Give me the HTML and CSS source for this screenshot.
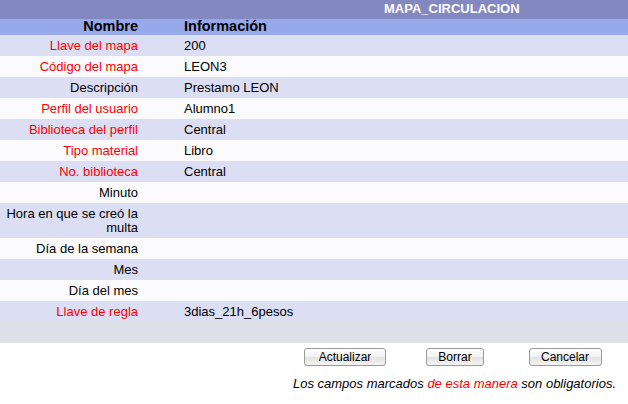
FILE: index.html
```html
<!DOCTYPE html>
<html lang="es">
<head>
<meta charset="utf-8">
<link rel="stylesheet" href="styles.css">
</head>
<body>
<div class="title-bar">MAPA_CIRCULACION</div>
<div class="grid">
  <div class="row head"><div class="label">Nombre</div><div class="value">Información</div></div>
  <div class="row odd"><div class="label req">Llave del mapa</div><div class="value">200</div></div>
  <div class="row even"><div class="label req">Código del mapa</div><div class="value">LEON3</div></div>
  <div class="row odd"><div class="label">Descripción</div><div class="value">Prestamo LEON</div></div>
  <div class="row even"><div class="label req">Perfil del usuario</div><div class="value">Alumno1</div></div>
  <div class="row odd"><div class="label req">Biblioteca del perfil</div><div class="value">Central</div></div>
  <div class="row even"><div class="label req">Tipo material</div><div class="value">Libro</div></div>
  <div class="row odd"><div class="label req">No. biblioteca</div><div class="value">Central</div></div>
  <div class="row even"><div class="label">Minuto</div><div class="value"></div></div>
  <div class="row odd"><div class="label">Hora en que se creó la multa</div><div class="value"></div></div>
  <div class="row even"><div class="label">Día de la semana</div><div class="value"></div></div>
  <div class="row odd"><div class="label">Mes</div><div class="value"></div></div>
  <div class="row even"><div class="label">Día del mes</div><div class="value"></div></div>
  <div class="row odd"><div class="label req">Llave de regla</div><div class="value">3dias_21h_6pesos</div></div>
  <div class="spacer"></div>
</div>
<div class="actions">
  <div class="cell"><button class="btn btn-update">Actualizar</button></div>
  <div class="cell"><button class="btn btn-delete">Borrar</button></div>
  <div class="cell"><button class="btn btn-cancel">Cancelar</button></div>
</div>
<p class="note">Los campos marcados <span class="req">de esta manera</span> son obligatorios.</p>
</body>
</html>
```
FILE: styles.css
```css
html, body {
  margin: 0;
  padding: 0;
  background: #ffffff;
}
body {
  font-family: "Liberation Sans", Arial, Helvetica, sans-serif;
  font-size: 13px;
  color: #000000;
}
.title-bar {
  height: 19px;
  line-height: 17px;
  background: #8488c0;
  color: #ffffff;
  font-weight: bold;
  padding-left: 384px;
}
.grid {
  display: flex;
  flex-direction: column;
}
.row {
  display: grid;
  grid-template-columns: 140px 1fr;
  column-gap: 44px;
  padding: 3.5px 0;
  line-height: 14px;
}
.row.head {
  background: #97a9eb;
  font-weight: bold;
  font-size: 14.5px;
  padding: 0;
  height: 16px;
  line-height: 15px;
}
.row.odd { background: #dcdef4; }
.row.even { background: #fbfbfe; }
.label {
  text-align: right;
  padding-right: 2px;
}
.req { color: #ff0000; }
.spacer {
  height: 21px;
  background: #dfdfe8;
}
.actions {
  display: flex;
  padding-left: 290px;
  margin-top: 5px;
}
.cell {
  width: 110px;
  display: flex;
  justify-content: center;
}
.btn {
  height: 18px;
  padding: 0;
  font-family: "Liberation Sans", Arial, Helvetica, sans-serif;
  font-size: 12px;
  line-height: 16px;
  color: #000000;
  border: 1px solid #9a9a9a;
  border-radius: 3px;
  background: linear-gradient(#ffffff, #f1f1f1 50%, #e2e2e2 51%, #f4f4f4);
}
.btn-update { width: 82px; }
.btn-delete { width: 58px; }
.btn-cancel { width: 73px; }
.note {
  margin: 10px 12px 0 0;
  text-align: right;
  font-style: italic;
  line-height: 16px;
}
```
